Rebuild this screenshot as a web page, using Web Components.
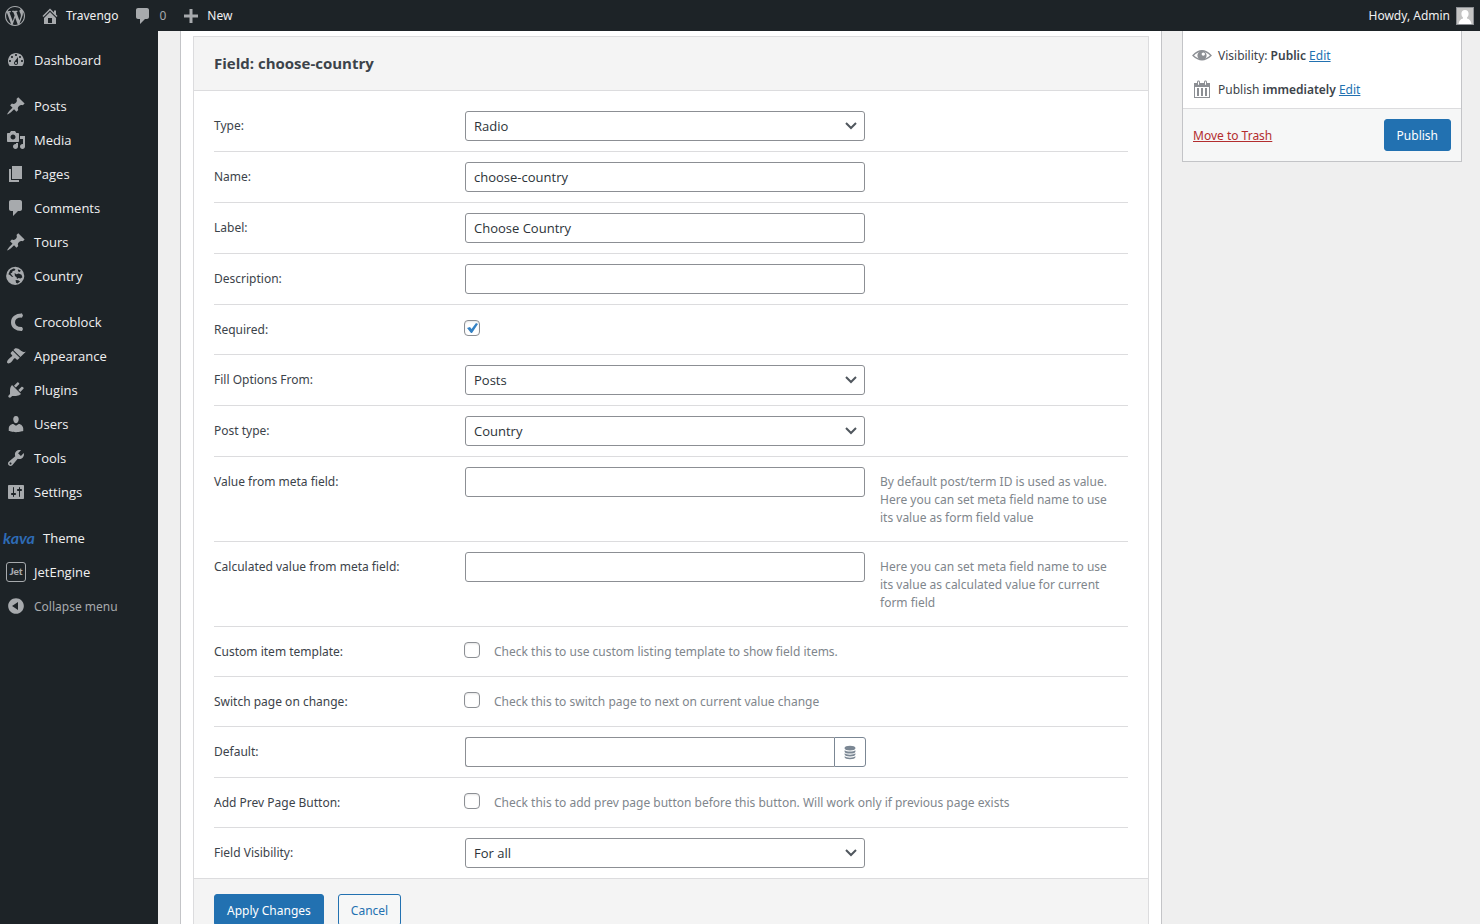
<!DOCTYPE html>
<html lang="en">
<head>
<meta charset="utf-8">
<meta name="viewport" content="width=device-width, initial-scale=1">
<title>Travengo - Form field</title>
<style>
  html, body {
    height: 100%;
  }
  body {
    margin: 0;
    background: #efefef;
    color: #3c434a;
    font: 13px/19px "Open Sans", "Noto Sans", sans-serif;
    --small: 12px/19px "Noto Sans", "Open Sans", sans-serif;
  }
</style>
</head>
<body>
<admin-shell>
  <admin-bar slot="bar"></admin-bar>
  <admin-menu slot="menu">
    <menu-item icon="dashboard">Dashboard</menu-item>
    <menu-item icon="pin" gap>Posts</menu-item>
    <menu-item icon="media">Media</menu-item>
    <menu-item icon="page">Pages</menu-item>
    <menu-item icon="comment">Comments</menu-item>
    <menu-item icon="pin">Tours</menu-item>
    <menu-item icon="globe">Country</menu-item>
    <menu-item icon="croco" gap>Crocoblock</menu-item>
    <menu-item icon="brush">Appearance</menu-item>
    <menu-item icon="plug">Plugins</menu-item>
    <menu-item icon="user">Users</menu-item>
    <menu-item icon="wrench">Tools</menu-item>
    <menu-item icon="sliders">Settings</menu-item>
    <menu-item icon="kava" gap>Theme</menu-item>
    <menu-item icon="jet">JetEngine</menu-item>
    <menu-item icon="collapse" muted>Collapse menu</menu-item>
  </admin-menu>
  <field-panel heading="Field: choose-country">
    <form-row type="select" label="Type:" value="Radio"></form-row>
    <form-row type="text" label="Name:" value="choose-country"></form-row>
    <form-row type="text" label="Label:" value="Choose Country"></form-row>
    <form-row type="text" label="Description:"></form-row>
    <form-row type="check" label="Required:" checked></form-row>
    <form-row type="select" label="Fill Options From:" value="Posts"></form-row>
    <form-row type="select" label="Post type:" value="Country"></form-row>
    <form-row type="text" label="Value from meta field:">By default post/term ID is used as value. Here you can set meta field name to use its value as form field value</form-row>
    <form-row type="text" label="Calculated value from meta field:">Here you can set meta field name to use its value as calculated value for current form field</form-row>
    <form-row type="check" label="Custom item template:">Check this to use custom listing template to show field items.</form-row>
    <form-row type="check" label="Switch page on change:">Check this to switch page to next on current value change</form-row>
    <form-row type="dynamic" label="Default:"></form-row>
    <form-row type="check" label="Add Prev Page Button:">Check this to add prev page button before this button. Will work only if previous page exists</form-row>
    <form-row type="select" label="Field Visibility:" value="For all" last></form-row>
    <wp-button slot="actions" primary>Apply Changes</wp-button>
    <wp-button slot="actions">Cancel</wp-button>
  </field-panel>
  <publish-box slot="side"></publish-box>
</admin-shell>

<script>
const ICONS = {
  wordpress: '<path d="M20 10c0-5.51-4.49-10-10-10C4.48 0 0 4.49 0 10c0 5.52 4.48 10 10 10 5.51 0 10-4.48 10-10zM7.78 15.37L4.37 6.22c.55-.02 1.17-.08 1.17-.08.5-.06.44-1.13-.06-1.11 0 0-1.45.11-2.37.11-.18 0-.37 0-.58-.01C4.12 2.69 6.87 1.11 10 1.11c2.33 0 4.45.87 6.05 2.34-.68-.11-1.65.39-1.65 1.58 0 .74.45 1.36.9 2.1.35.61.55 1.36.55 2.46 0 1.49-1.4 5-1.4 5l-3.03-8.37c.54-.02.82-.17.82-.17.5-.05.44-1.25-.06-1.22 0 0-1.44.12-2.38.12-.87 0-2.33-.12-2.33-.12-.5-.03-.56 1.2-.06 1.22l.92.08 1.26 3.41zM17.41 10c.24-.64.74-1.87.43-4.25.7 1.29 1.05 2.71 1.05 4.25 0 3.29-1.73 6.24-4.4 7.78.97-2.59 1.94-5.2 2.92-7.78zM6.1 18.09C3.12 16.65 1.11 13.53 1.11 10c0-1.3.23-2.48.72-3.59C3.25 10.3 4.67 14.2 6.1 18.09zm4.03-6.63l2.58 6.98c-.86.29-1.76.45-2.71.45-.79 0-1.57-.11-2.29-.33.81-2.38 1.62-4.74 2.42-7.1z"/>',
  home: '<path fill-rule="evenodd" d="M16 8.5l1.53 1.53-1.06 1.06L10 4.6l-6.47 6.49-1.06-1.06L10 2.5l4 4v-2h2v4zm-6-2.46l6 5.99V18H4v-5.97zM12 17v-5H8v5h4z"/>',
  comment: '<path d="M5 2h9c1.1 0 2 .9 2 2v7c0 1.1-.9 2-2 2h-2l-5 5v-5H5c-1.1 0-2-.9-2-2V4c0-1.1.9-2 2-2z"/>',
  plus: '<path d="M17 8.5v3h-5.500v5.500h-3v-5.500H3v-3h5.500V3h3v5.500z"/>',
  dashboard: '<path fill-rule="evenodd" d="M3.76 16h12.48c1.1-1.37 1.76-3.11 1.76-5 0-4.42-3.58-8-8-8s-8 3.58-8 8c0 1.89.66 3.63 1.76 5zM10 4c.55 0 1 .45 1 1s-.45 1-1 1-1-.45-1-1 .45-1 1-1zM6 6c.55 0 1 .45 1 1s-.45 1-1 1-1-.45-1-1 .45-1 1-1zm8 0c.55 0 1 .45 1 1s-.45 1-1 1-1-.45-1-1 .45-1 1-1zm-5.370 5.550L12 7v6c0 1.100-.9 2-2 2s-2-.9-2-2c0-.57.24-1.080.63-1.450zM4 10c.55 0 1 .45 1 1s-.45 1-1 1-1-.45-1-1 .45-1 1-1zm12 0c.55 0 1 .45 1 1s-.45 1-1 1-1-.45-1-1 .45-1 1-1zm-5 3c0-.55-.45-1-1-1s-1 .45-1 1 .45 1 1 1 1-.45 1-1z"/>',
  pin: '<path d="M10.440 3.020l1.820-1.820 6.360 6.350-1.830 1.820c-1.050-.68-2.480-.57-3.410.36l-.75.75c-.92.93-1.040 2.350-.35 3.410l-1.830 1.820-2.410-2.410-2.800 2.790c-.42.42-3.380 2.710-3.800 2.290s1.860-3.390 2.280-3.810l2.790-2.790L4.100 9.360l1.830-1.820c1.050.69 2.480.57 3.400-.36l.75-.75c.93-.92 1.050-2.350.36-3.410z"/>',
  media: '<path fill-rule="evenodd" d="M13 11V4c0-.55-.45-1-1-1h-1.670L9 1H5L3.670 3H2c-.55 0-1 .45-1 1v7c0 .55.45 1 1 1h10c.55 0 1-.45 1-1zM7 4.500c1.380 0 2.500 1.120 2.500 2.500S8.380 9.500 7 9.500 4.500 8.380 4.500 7 5.620 4.500 7 4.500zM14 6h5v10.500c0 1.380-1.120 2.500-2.500 2.500S14 17.880 14 16.500s1.120-2.500 2.500-2.500c.17 0 .34.02.5.05V9h-3V6zm-4 8.050V13h2v3.500c0 1.380-1.120 2.500-2.500 2.500S7 17.880 7 16.500 8.120 14 9.500 14c.17 0 .34.02.5.05z"/>',
  page: '<path d="M6 15V2h10v13H6zm-1 1h8v2H3V5h2v11z"/>',
  globe: '<path fill-rule="evenodd" d="M9.200 .8a9.100 9.100 0 1 0 0 18.200 9.100 9.100 0 0 0 0-18.200zM4.200 4.300L7.500 2.400l2 .6-1 1.700-1.800.3-.6 1.700-1.600.9 1.600 1.800 1.300 1.600-1.600-.2L3.900 9 2.400 8.300zM11.800 3.200l3 1.400-.9 1.400-1.700-.4zM8.600 7l1.800 1.200 2.400-.7 2.700 1.300.9 2.400-1.800 1.400-2.100-.5-1.500 1-.4-1.900-1.700-1.200zM9.600 14.100l2.700.2 1.800 1.300-2.600 2-1.500-.8z"/>',
  croco: '<path d="M15.500 3.500C10.500 3.500 7 6 7 10.200S10.500 17 15.500 17" fill="none" stroke="currentColor" stroke-width="4"/><path d="M16 1.500l1 2-1 2h-1v-4zM16 15l1 2-1 2h-1v-4z"/>',
  brush: '<path d="M14.480 11.060L7.410 3.990l1.500-1.500c.5-.56 2.300-.47 3.510.32 1.210.8 1.430 1.280 2.910 2.100 1.180.64 2.450 1.260 4.450.85zm-.71.71L6.700 4.700 4.930 6.470c-.39.39-.39 1.020 0 1.410l1.060 1.060c.39.39.39 1.030 0 1.420-.6.6-1.430 1.110-2.210 1.690-.35.26-.7.53-1.010.84C1.430 14.230.4 16.080 1.400 17.070c.99 1 2.840-.03 4.180-1.360.31-.31.58-.66.85-1.020.57-.78 1.080-1.610 1.690-2.210.39-.39 1.020-.39 1.410 0l1.060 1.060c.39.39 1.020.39 1.410 0z"/>',
  plug: '<path d="M13.110 4.360L9.870 7.600 8 5.730l3.240-3.240c.35-.34 1.050-.2 1.560.32.52.51.66 1.210.31 1.550zm-8 1.770l.91-1.120 9.010 9.010-1.190.84c-.71.71-2.630 1.160-3.820 1.160H6.140L4.900 17.260c-.59.59-1.540.59-2.120 0-.59-.58-.59-1.530 0-2.120l1.240-1.240v-3.880c0-1.130.4-3.190 1.090-3.890zm7.260 3.970l3.240-3.240c.34-.35 1.040-.21 1.550.31.52.51.66 1.210.31 1.550l-3.240 3.250z"/>',
  user: '<path d="M10 9.250c-2.270 0-2.730-3.440-2.730-3.440C7 4.020 7.820 2 9.970 2c2.160 0 2.980 2.020 2.710 3.810 0 0-.41 3.440-2.680 3.440zm0 2.570L12.720 10c2.390 0 4.520 2.330 4.520 4.530v2.490s-3.650 1.130-7.240 1.130c-3.650 0-7.240-1.130-7.240-1.130v-2.490c0-2.250 1.940-4.480 4.470-4.480z"/>',
  wrench: '<path fill-rule="evenodd" d="M16.680 9.770c-1.340 1.340-3.300 1.670-4.950.99l-5.410 6.520c-.99.99-2.590.99-3.580 0s-.99-2.590 0-3.570l6.520-5.420c-.68-1.650-.35-3.610.99-4.950 1.280-1.280 3.120-1.620 4.720-1.060l-2.890 2.890 2.820 2.820 2.860-2.870c.53 1.580.18 3.390-1.080 4.650zM3.810 16.210c.4.39 1.040.39 1.430 0 .4-.4.4-1.040 0-1.430-.39-.4-1.030-.4-1.430 0-.39.39-.39 1.030 0 1.430z"/>',
  sliders: '<path fill-rule="evenodd" d="M18 16V4c0-.55-.45-1-1-1H3c-.55 0-1 .45-1 1v12c0 .55.45 1 1 1h14c.55 0 1-.45 1-1zM8 11h1c.55 0 1 .45 1 1s-.45 1-1 1H8v1.500c0 .28-.22.5-.5.5s-.5-.22-.5-.5V13H6c-.55 0-1-.45-1-1s.45-1 1-1h1V5.500c0-.28.22-.5.5-.5s.5.22.5.5V11zm5-2h-1c-.55 0-1-.45-1-1s.45-1 1-1h1V5.500c0-.28.22-.5.5-.5s.5.22.5.5V7h1c.55 0 1 .45 1 1s-.45 1-1 1h-1v5.500c0 .28-.22.5-.5.5s-.5-.22-.5-.5V9z"/>',
  collapse: '<path fill-rule="evenodd" d="M10 2.160c-4.330 0-7.840 3.510-7.840 7.840s3.510 7.840 7.840 7.840 7.840-3.510 7.840-7.840-3.510-7.840-7.840-7.840zm2 11.720L6.040 9.970 12 6.070v7.810z"/>',
  eye: '<path d="M1 10.500Q10 1 19 10.500Q10 19 1 10.500z" fill="none" stroke="currentColor" stroke-width="1.300"/><path fill-rule="evenodd" d="M10 5.800a4.600 4.600 0 1 0 0 9.200 4.600 4.600 0 0 0 0-9.200zm1.300 1.600a1.700 1.700 0 1 1 0 3.400 1.700 1.700 0 0 1 0-3.400z"/>',
  calendar: '<path fill-rule="evenodd" d="M15 4h3v15H2V4h3V3c0-.41.15-.76.44-1.060.29-.29.65-.44 1.060-.44s.77.15 1.060.44c.29.3.44.65.44 1.060v1h4V3c0-.41.15-.76.44-1.060.29-.29.65-.44 1.060-.44s.77.15 1.060.44c.29.3.44.65.44 1.060v1zM6 3v2.500c0 .14.05.26.15.36.09.09.21.14.35.14s.26-.05.35-.14c.1-.1.15-.22.15-.36V3c0-.14-.05-.26-.15-.35-.09-.1-.21-.15-.35-.15s-.26.05-.35.15c-.1.09-.15.21-.15.35zm7 0v2.500c0 .14.05.26.14.36.1.09.22.14.36.14s.26-.05.36-.14c.09-.1.14-.22.14-.36V3c0-.14-.05-.26-.14-.35-.1-.1-.22-.15-.36-.15s-.26.05-.36.15c-.09.09-.14.21-.14.35zm4 15V8H3v10h14zM7 9v8H5V9h2zm4 0v8H9V9h2zm4 0v8h-2V9h2z"/>',
  database: '<path d="M4 5.200C4 3.800 6.700 3 10 3s6 .8 6 2.200v.9c0 1.400-2.700 2.200-6 2.200s-6-.8-6-2.200zM4 8c1 1 3.300 1.500 6 1.500S15 9 16 8v1.600c0 1.300-2.700 2.100-6 2.100s-6-.8-6-2.100zM4 11.500c1 1 3.300 1.500 6 1.500s5-.5 6-1.500v1.400c0 1.300-2.700 2.100-6 2.100s-6-.8-6-2.100zM4 14.800c1 1 3.300 1.500 6 1.500s5-.5 6-1.500v1c0 1.400-2.700 2.200-6 2.200s-6-.8-6-2.200z"/>'
};

class WpIcon extends HTMLElement {
  connectedCallback() {
    this.attachShadow({ mode: 'open' });
    this.shadowRoot.innerHTML = `
      <style>
        :host { display: block; flex: none; width: 20px; height: 20px; }
        svg { display: block; width: 100%; height: 100%; fill: currentColor; }
      </style>
      <svg viewBox="0 0 20 20" aria-hidden="true">${ICONS[this.getAttribute('name')]}</svg>
    `;
  }
}

class AdminShell extends HTMLElement {
  connectedCallback() {
    this.attachShadow({ mode: 'open' });
    this.shadowRoot.innerHTML = `
      <style>
        :host {
          display: grid;
          grid-template: auto minmax(0, 1fr) / 158px minmax(0, 1fr);
          height: 100vh;
          overflow: hidden;
        }
        .bar { grid-column: 1 / -1; }
        aside { background: #1d2327; }
        main {
          display: grid;
          grid-template-columns: minmax(0, 1fr) 280px;
          gap: 20px;
          align-items: start;
          padding: 0 18px 0 22px;
          overflow: auto;
          scrollbar-width: none;
        }
        .metabox {
          background: #fff;
          border: solid #c3c4c7;
          border-width: 0 1px;
          padding: 5px 12px 12px;
        }
      </style>
      <header class="bar"><slot name="bar"></slot></header>
      <aside><slot name="menu"></slot></aside>
      <main>
        <div class="metabox"><slot></slot></div>
        <slot name="side"></slot>
      </main>
    `;
  }
}

class AdminBar extends HTMLElement {
  connectedCallback() {
    this.attachShadow({ mode: 'open' });
    this.shadowRoot.innerHTML = `
      <style>
        :host {
          display: flex;
          align-items: center;
          gap: 15px;
          height: 31px;
          padding: 0 6px 0 5px;
          background: #1d2327;
          color: #f0f0f1;
          font: var(--small);
        }
        a {
          display: flex;
          align-items: center;
          gap: 6px;
          color: inherit;
          text-decoration: none;
          white-space: nowrap;
        }
        wp-icon { color: #a7aaad; }
        .count { color: #a7aaad; }
        .account { margin-left: auto; }
        .avatar {
          width: 16px;
          height: 16px;
          border: 1px solid #8c8f94;
          background: #c4c4c4;
        }
      </style>
      <a href="#" aria-label="About WordPress"><wp-icon name="wordpress"></wp-icon></a>
      <a href="#"><wp-icon name="home"></wp-icon>Travengo</a>
      <a href="#" class="count"><wp-icon name="comment"></wp-icon>0</a>
      <a href="#"><wp-icon name="plus"></wp-icon>New</a>
      <a href="#" class="account">Howdy, Admin
        <svg class="avatar" viewBox="0 0 16 16" fill="#fff" aria-hidden="true">
          <path d="M8 2c2.300 0 3.600 1.600 3.600 3.700 0 1.500-.6 3-1.600 3.800v1c2.300.6 4 2 4.500 5.500h-13C2 12.500 3.700 11.100 6 10.500v-1C5 8.700 4.400 7.200 4.400 5.700 4.400 3.600 5.700 2 8 2z"/>
        </svg>
      </a>
    `;
  }
}

class AdminMenu extends HTMLElement {
  connectedCallback() {
    this.attachShadow({ mode: 'open' });
    this.shadowRoot.innerHTML = `
      <style>
        :host { display: block; padding-top: 12px; }
      </style>
      <nav><slot></slot></nav>
    `;
  }
}

class MenuItem extends HTMLElement {
  connectedCallback() {
    const name = this.getAttribute('icon');
    let icon = `<wp-icon name="${name}"></wp-icon>`;
    if (name === 'kava') icon = '<span class="kava">kava</span>';
    if (name === 'jet') icon = '<span class="jet">Jet</span>';
    this.attachShadow({ mode: 'open' });
    this.shadowRoot.innerHTML = `
      <style>
        :host { display: block; }
        :host([gap]) { margin-top: 12px; }
        a {
          display: flex;
          align-items: center;
          gap: 8px;
          height: 34px;
          padding-left: 6px;
          color: #f0f0f1;
          text-decoration: none;
          white-space: nowrap;
        }
        :host([muted]) a { color: #a7aaad; font: var(--small); }
        :host([icon="kava"]) a { padding-left: 3px; gap: 6px; }
        wp-icon { color: #a7aaad; }
        .kava {
          width: 34px;
          color: #2e6bb5;
          font: italic 700 16px/20px Lato, sans-serif;
        }
        .jet {
          box-sizing: border-box;
          width: 20px;
          height: 20px;
          border: 1px solid #a7aaad;
          border-radius: 3px;
          color: #a7aaad;
          font: 900 10px/17px Lato, sans-serif;
          text-align: center;
        }
      </style>
      <a href="#">${icon}<slot></slot></a>
    `;
  }
}

class WpButton extends HTMLElement {
  connectedCallback() {
    this.attachShadow({ mode: 'open' });
    this.shadowRoot.innerHTML = `
      <style>
        :host { display: inline-block; }
        button {
          height: 32px;
          padding: 0 12px;
          border: 1px solid #2271b1;
          border-radius: 3px;
          background: #f6f7f7;
          color: #2271b1;
          font: var(--small);
          white-space: nowrap;
          cursor: pointer;
        }
        :host([primary]) button { background: #2271b1; color: #fff; }
      </style>
      <button type="button"><slot></slot></button>
    `;
  }
}

class FieldPanel extends HTMLElement {
  connectedCallback() {
    this.attachShadow({ mode: 'open' });
    this.shadowRoot.innerHTML = `
      <style>
        :host { display: block; border: 1px solid #dcdcde; }
        h2 {
          margin: 0;
          padding: 17px 20px;
          border-bottom: 1px solid #dcdcde;
          background: #f4f4f4;
          font-size: 15px;
          line-height: 19px;
        }
        .rows { padding: 10px 20px 0; }
        footer {
          display: flex;
          gap: 14px;
          padding: 15px 20px;
          border-top: 1px solid #dcdcde;
          background: #f4f4f4;
        }
      </style>
      <section>
        <h2>${this.getAttribute('heading')}</h2>
        <div class="rows"><slot></slot></div>
        <footer><slot name="actions"></slot></footer>
      </section>
    `;
  }
}

class FormRow extends HTMLElement {
  connectedCallback() {
    this.attachShadow({ mode: 'open' });
    this.shadowRoot.innerHTML = `
      <style>
        :host {
          display: grid;
          grid-template-columns: 251px minmax(0, 400px) minmax(0, 1fr);
          align-items: start;
          padding: 10px 0;
          border-bottom: 1px solid #dcdcde;
        }
        :host([last]) { border-bottom: 0; }
        :host([type="check"]) { grid-template-columns: 250px 16px minmax(0, 1fr); }
        label { padding: 5px 0; font: var(--small); }
        .help {
          padding: 6px 8px 4px 15px;
          color: #80868c;
          font: var(--small);
          line-height: 18px;
        }
        :host([type="check"]) .help { padding: 5px 0 5px 14px; line-height: 19px; }
        input, select {
          box-sizing: border-box;
          margin: 0;
          border: 1px solid #8c8f94;
          border-radius: 3px;
          background: #fff;
          color: #2c3338;
          font: inherit;
        }
        .text, select { width: 100%; height: 30px; padding: 0 8px; }
        select {
          appearance: none;
          background: #fff url('data:image/svg+xml,<svg xmlns="http://www.w3.org/2000/svg" viewBox="0 0 12 8"><path d="M1 1l5 5 5-5" fill="none" stroke="%2350575e" stroke-width="2"/></svg>') no-repeat right 7px center / 12px 8px;
        }
        .box {
          appearance: none;
          width: 16px;
          height: 16px;
          margin-top: 5px;
          border-radius: 4px;
          box-shadow: inset 0 1px 2px rgba(0, 0, 0, .1);
        }
        .box:checked {
          background: #fff url('data:image/svg+xml,<svg xmlns="http://www.w3.org/2000/svg" viewBox="0 0 14 14"><path d="M2 7l3-1 1.500 2L11 2l2 1-6 9H6z" fill="%233582c4"/></svg>') center / 14px 14px;
        }
        .dynamic { display: grid; grid-template-columns: minmax(0, 1fr) 32px; margin-right: -1px; }
        .dynamic .text { border-radius: 3px 0 0 3px; border-right: 0; }
        .dynamic button {
          display: grid;
          place-items: center;
          height: 30px;
          padding: 0;
          border: 1px solid #7b8794;
          border-radius: 0 3px 3px 0;
          background: #fff;
          color: #7b8794;
        }
        .dynamic wp-icon { width: 18px; height: 18px; }
      </style>
      <label for="field">${this.getAttribute('label')}</label>
      ${this.control()}
      ${this.textContent ? '<div class="help"><slot></slot></div>' : ''}
    `;
  }

  control() {
    const value = this.getAttribute('value') || '';
    switch (this.getAttribute('type')) {
      case 'select':
        return `<select id="field"><option>${value}</option></select>`;
      case 'check':
        return `<input id="field" class="box" type="checkbox" ${this.hasAttribute('checked') ? 'checked' : ''}>`;
      case 'dynamic':
        return `
          <div class="dynamic">
            <input id="field" class="text" type="text">
            <button type="button" aria-label="Dynamic value"><wp-icon name="database"></wp-icon></button>
          </div>`;
      default:
        return `<input id="field" class="text" type="text" value="${value}">`;
    }
  }
}

class PublishBox extends HTMLElement {
  connectedCallback() {
    this.attachShadow({ mode: 'open' });
    this.shadowRoot.innerHTML = `
      <style>
        :host {
          display: block;
          border: 1px solid #c3c4c7;
          border-top: 0;
          background: #fff;
          font: var(--small);
        }
        ul { margin: 0; padding: 7px 9px 2px; list-style: none; }
        li { display: flex; align-items: center; gap: 6px; height: 34px; }
        wp-icon { color: #8c8f94; }
        b { font-weight: 600; }
        a { color: #2271b1; }
        .trash { color: #b32d2e; }
        footer {
          display: flex;
          align-items: center;
          justify-content: space-between;
          padding: 10px;
          border-top: 1px solid #dcdcde;
          background: #f6f7f7;
        }
      </style>
      <ul>
        <li><wp-icon name="eye"></wp-icon><span>Visibility: <b>Public</b> <a href="#">Edit</a></span></li>
        <li><wp-icon name="calendar"></wp-icon><span>Publish <b>immediately</b> <a href="#">Edit</a></span></li>
      </ul>
      <footer>
        <a href="#" class="trash">Move to Trash</a>
        <wp-button primary>Publish</wp-button>
      </footer>
    `;
  }
}

customElements.define('wp-icon', WpIcon);
customElements.define('wp-button', WpButton);
customElements.define('admin-shell', AdminShell);
customElements.define('admin-bar', AdminBar);
customElements.define('admin-menu', AdminMenu);
customElements.define('menu-item', MenuItem);
customElements.define('field-panel', FieldPanel);
customElements.define('form-row', FormRow);
customElements.define('publish-box', PublishBox);
</script>
</body>
</html>
